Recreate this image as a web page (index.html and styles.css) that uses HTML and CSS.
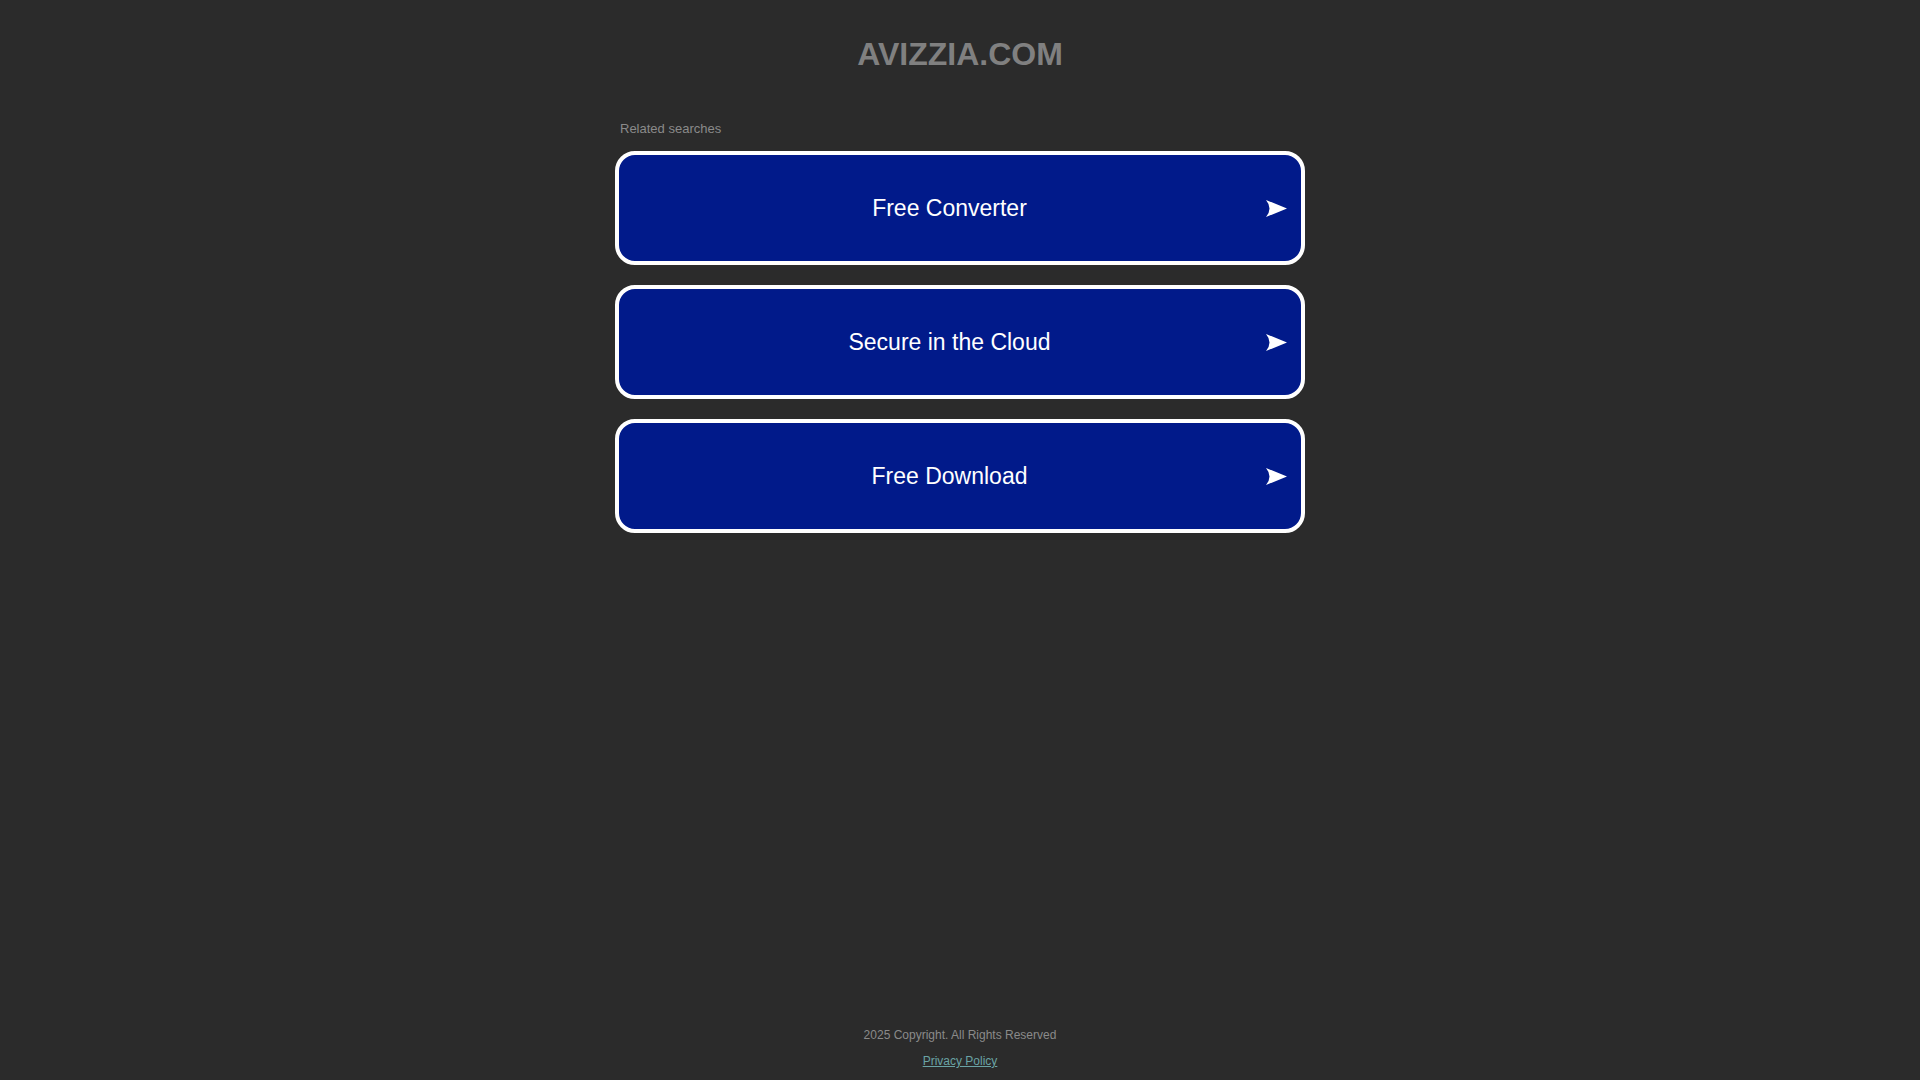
FILE: index.html
```html
<!DOCTYPE html>
<html lang="en">
<head>
<meta charset="utf-8">
<title>avizzia.com</title>
<link rel="stylesheet" href="styles.css">
</head>
<body>
<div class="page">
  <header class="header">
    <h1 class="domain">AVIZZIA.COM</h1>
  </header>
  <main class="content">
    <p class="related">Related searches</p>
    <ul class="links">
      <li><a class="link" href="#"><span class="link-text">Free Converter</span><svg class="arrow" viewBox="0 0 21 17" width="21" height="17"><path d="M0 0 L21 8.5 L0 17 Q7 8.5 0 0 Z" fill="#fff"/></svg></a></li>
      <li><a class="link" href="#"><span class="link-text">Secure in the Cloud</span><svg class="arrow" viewBox="0 0 21 17" width="21" height="17"><path d="M0 0 L21 8.5 L0 17 Q7 8.5 0 0 Z" fill="#fff"/></svg></a></li>
      <li><a class="link" href="#"><span class="link-text">Free Download</span><svg class="arrow" viewBox="0 0 21 17" width="21" height="17"><path d="M0 0 L21 8.5 L0 17 Q7 8.5 0 0 Z" fill="#fff"/></svg></a></li>
    </ul>
  </main>
  <footer class="footer">
    <p class="copyright">2025 Copyright. All Rights Reserved</p>
    <a class="privacy" href="#">Privacy Policy</a>
  </footer>
</div>
</body>
</html>
```
FILE: styles.css
```css
html, body {
  margin: 0;
  padding: 0;
  background: #2b2b2b;
}
body {
  font-family: "Liberation Sans", Arial, sans-serif;
}
.page {
  min-height: 100vh;
  display: flex;
  flex-direction: column;
  align-items: center;
  box-sizing: border-box;
  padding-top: 36px;
  padding-bottom: 12px;
}
.header {
  width: 690px;
  text-align: center;
}
.domain {
  margin: 0;
  font-size: 32px;
  line-height: 37px;
  font-weight: bold;
  color: #808080;
}
.content {
  width: 690px;
  margin-top: 48px;
}
.related {
  margin: 0 0 15px 5px;
  font-size: 13px;
  line-height: 15px;
  color: #8a8a8a;
}
.links {
  list-style: none;
  margin: 0;
  padding: 0;
  display: flex;
  flex-direction: column;
  gap: 20px;
}
.link {
  position: relative;
  display: flex;
  align-items: center;
  justify-content: center;
  box-sizing: border-box;
  height: 114px;
  padding-right: 21px;
  border: 4px solid #ffffff;
  border-radius: 20px;
  background: #011a8a;
  color: #ffffff;
  text-decoration: none;
  font-size: 23px;
}
.link-text {
  line-height: 27px;
}
.arrow {
  position: absolute;
  right: 14px;
  top: 50%;
  margin-top: -8px;
}
.footer {
  margin-top: auto;
  display: flex;
  flex-direction: column;
  align-items: center;
  gap: 12px;
  font-size: 12px;
  line-height: 14px;
}
.copyright {
  margin: 0;
  color: #8a8a8a;
}
.privacy {
  color: #6aa3a5;
  text-decoration: underline;
}
```
